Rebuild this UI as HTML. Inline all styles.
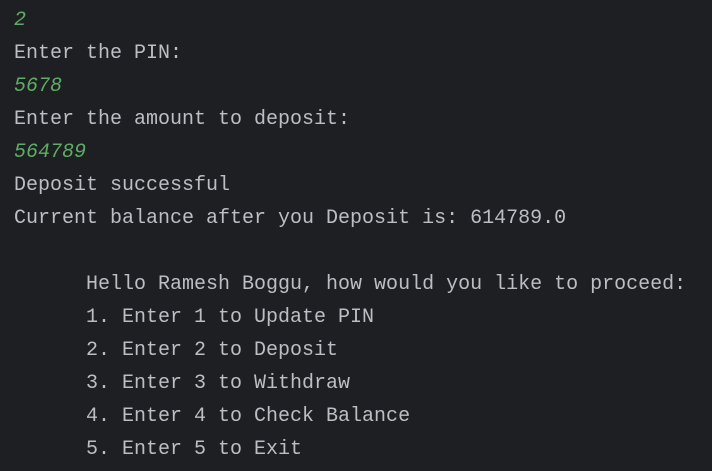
<!DOCTYPE html>
<html><head><meta charset="utf-8"><style>
html,body{margin:0;padding:0;}
body{width:712px;height:471px;background:#1e1f22;overflow:hidden;}
pre{margin:0;padding:4px 0 0 14px;font-family:"Liberation Mono",monospace;font-size:20px;line-height:33px;color:#bcbec4;white-space:pre;}
.g{color:#5fad65;font-style:italic;}
</style></head><body><pre><span class="g">2</span>
Enter the PIN:
<span class="g">5678</span>
Enter the amount to deposit:
<span class="g">564789</span>
Deposit successful
Current balance after you Deposit is: 614789.0

      Hello Ramesh Boggu, how would you like to proceed:
      1. Enter 1 to Update PIN
      2. Enter 2 to Deposit
      3. Enter 3 to Withdraw
      4. Enter 4 to Check Balance
      5. Enter 5 to Exit
</pre></body></html>
